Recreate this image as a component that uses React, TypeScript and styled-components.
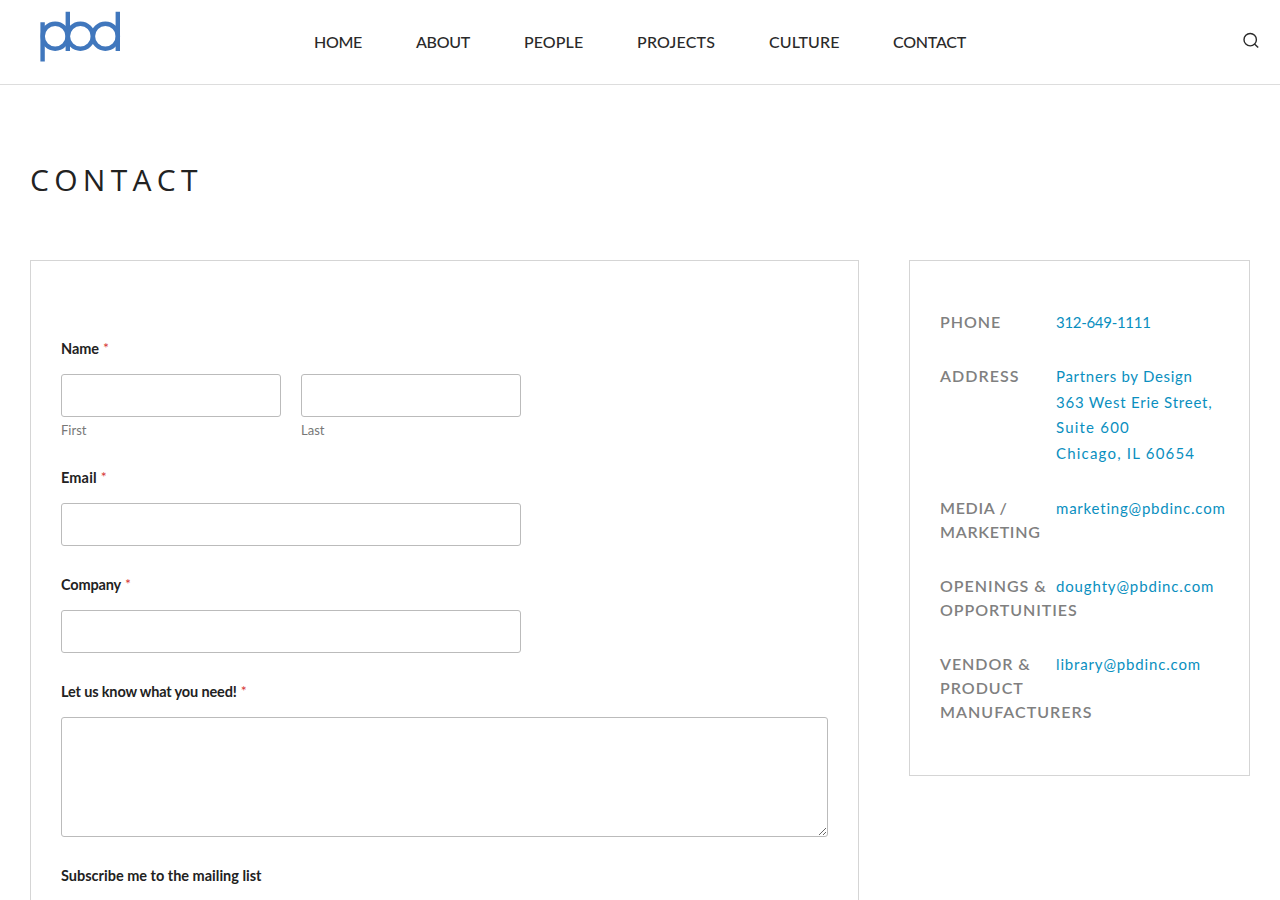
import React from "react";
import styled, { createGlobalStyle } from "styled-components";

const GlobalStyle = createGlobalStyle`
  * { box-sizing: border-box; }
  html, body { margin: 0; background: #fff; }
  body { height: 900px; overflow: hidden; color: #222; font-family: Lato, "Open Sans", sans-serif; }
`;

const Page = styled.div`
  width: 1280px;
  height: 900px;
  overflow: hidden;
`;

const Header = styled.header`
  display: flex;
  height: 85px;
  padding: 0 20px 0 40px;
  border-bottom: 1px solid #ddd;
`;

const LogoLink = styled.a`
  display: block;
  width: 80px;
  padding-top: 11px;
  svg { display: block; }
`;

const Nav = styled.nav`
  display: flex;
  gap: 54px;
  margin-left: 194px;
  padding-top: 30px;
`;

const NavLink = styled.a<{ $width: number; $track: number }>`
  width: ${(p) => p.$width}px;
  font-size: 16px;
  font-weight: 500;
  line-height: 24px;
  letter-spacing: ${(p) => p.$track}px;
  white-space: nowrap;
  color: #2a2a2a;
`;

const SearchButton = styled.button`
  align-self: flex-start;
  margin: 32px 0 0 auto;
  padding: 0;
  border: 0;
  background: none;
  svg { display: block; }
`;

const Title = styled.h1`
  margin: 75px 0 60px 30px;
  font: 400 30px/40px "Open Sans", sans-serif;
  letter-spacing: 5.3px;
  color: #222;
`;

const Columns = styled.main`
  display: grid;
  grid-template-columns: 829px 341px;
  gap: 50px;
  align-items: start;
  padding: 0 30px;
`;

const FormCard = styled.form`
  display: flex;
  flex-direction: column;
  gap: 29px;
  height: 740px;
  padding: 78px 30px 0;
  border: 1px solid #d5d5d5;
`;

const Field = styled.div`
  display: flex;
  flex-direction: column;
  gap: 15px;
`;

const Label = styled.label<{ $track: number }>`
  display: flex;
  gap: 4px;
  height: 20px;
  font-size: 14.5px;
  font-weight: 700;
  line-height: 19px;
  letter-spacing: ${(p) => p.$track}px;
  white-space: nowrap;
  color: #222;
`;

const Required = styled.span`
  font-size: 14px;
  font-weight: 400;
  line-height: 18px;
  letter-spacing: 0;
  color: #d63637;
`;

const NameRow = styled.div`
  display: grid;
  grid-template-columns: 220px 220px;
  gap: 20px;
`;

const NamePart = styled.div`
  display: flex;
  flex-direction: column;
  gap: 4px;
`;

const Input = styled.input`
  display: block;
  width: 100%;
  max-width: 460px;
  height: 43px;
  border: 1px solid #bbb;
  border-radius: 3px;
  background: #fff;
  outline: 0;
`;

const TextArea = styled.textarea`
  display: block;
  width: 100%;
  height: 120px;
  border: 1px solid #bbb;
  border-radius: 3px;
  background: #fff;
  resize: vertical;
  outline: 0;
`;

const SubLabel = styled.span`
  font-size: 13px;
  line-height: 18px;
  color: #777;
`;

const InfoCard = styled.aside`
  display: flex;
  flex-direction: column;
  gap: 30px;
  height: 516px;
  padding: 49px 0 0 30px;
  border: 1px solid #d5d5d5;
`;

const InfoRow = styled.div<{ $height: number }>`
  display: grid;
  grid-template-columns: 116px 1fr;
  height: ${(p) => p.$height}px;
`;

const InfoLabel = styled.div`
  font-size: 16px;
  font-weight: 600;
  line-height: 24px;
  color: #808080;
`;

const InfoValue = styled.a`
  font-size: 15px;
  line-height: 25.6px;
  color: #0a8fc0;
`;

const Line = styled.span<{ $track: number }>`
  display: block;
  white-space: nowrap;
  letter-spacing: ${(p) => p.$track}px;
`;

type TextLine = [text: string, track: number];

const navItems: [string, number, number][] = [
  ["HOME", 48, -0.35],
  ["ABOUT", 54, -0.3],
  ["PEOPLE", 59, 0.1],
  ["PROJECTS", 78, 0.2],
  ["CULTURE", 70, 0.1],
  ["CONTACT", 74, -0.25],
];

const info: { height: number; label: TextLine[]; value: TextLine[] }[] = [
  { height: 24, label: [["PHONE", 0.95]], value: [["312-649-1111", -0.3]] },
  {
    height: 102,
    label: [["ADDRESS", 1.05]],
    value: [
      ["Partners by Design", 0.7],
      ["363 West Erie Street,", 0.77],
      ["Suite 600", 1.2],
      ["Chicago, IL 60654", 1.2],
    ],
  },
  { height: 48, label: [["MEDIA /", 0.7], ["MARKETING", 0.7]], value: [["marketing@pbdinc.com", 0.79]] },
  { height: 48, label: [["OPENINGS &", 0.98], ["OPPORTUNITIES", 0.93]], value: [["doughty@pbdinc.com", 0.86]] },
  {
    height: 72,
    label: [["VENDOR &", 0.95], ["PRODUCT", 1], ["MANUFACTURERS", 1.03]],
    value: [["library@pbdinc.com", 0.84]],
  },
];

const Logo = () => (
  <svg width="81" height="52" viewBox="0 0 81 52" fill="none" stroke="#4077bd" strokeWidth="4.4">
    <path d="M2.6 11.3V50.6M27.8 .7V40M77.8 .7V40" />
    <circle cx="15.2" cy="25.2" r="12.5" />
    <circle cx="40.4" cy="25.2" r="12.5" />
    <circle cx="65.4" cy="25.2" r="12.5" />
  </svg>
);

const SearchIcon = () => (
  <svg width="18" height="18" viewBox="0 0 18 18" fill="none" stroke="#2a2a2a" strokeWidth="1.4">
    <circle cx="8.2" cy="7.7" r="6.2" />
    <path d="M12.5 12L16.2 15.6" />
  </svg>
);

const Lines = ({ lines }: { lines: TextLine[] }) => (
  <>
    {lines.map(([text, track]) => (
      <Line key={text} $track={track}>{text}</Line>
    ))}
  </>
);

const FieldLabel = ({ text, track, required = true }: { text: string; track: number; required?: boolean }) => (
  <Label $track={track}>
    {text}
    {required && <Required>*</Required>}
  </Label>
);

export default function App() {
  return (
    <Page>
      <GlobalStyle />
      <Header>
        <LogoLink aria-label="pbd"><Logo /></LogoLink>
        <Nav>
          {navItems.map(([text, width, track]) => (
            <NavLink key={text} $width={width} $track={track}>{text}</NavLink>
          ))}
        </Nav>
        <SearchButton aria-label="Search"><SearchIcon /></SearchButton>
      </Header>
      <Title>CONTACT</Title>
      <Columns>
        <FormCard>
          <Field>
            <FieldLabel text="Name" track={-0.08} />
            <NameRow>
              <NamePart><Input /><SubLabel>First</SubLabel></NamePart>
              <NamePart><Input /><SubLabel>Last</SubLabel></NamePart>
            </NameRow>
          </Field>
          <Field>
            <FieldLabel text="Email" track={0.15} />
            <Input />
          </Field>
          <Field>
            <FieldLabel text="Company" track={-0.15} />
            <Input />
          </Field>
          <Field>
            <FieldLabel text="Let us know what you need!" track={-0.15} />
            <TextArea />
          </Field>
          <Field>
            <FieldLabel text="Subscribe me to the mailing list" track={0} required={false} />
          </Field>
        </FormCard>
        <InfoCard>
          {info.map((row) => (
            <InfoRow key={row.label[0][0]} $height={row.height}>
              <InfoLabel><Lines lines={row.label} /></InfoLabel>
              <InfoValue><Lines lines={row.value} /></InfoValue>
            </InfoRow>
          ))}
        </InfoCard>
      </Columns>
    </Page>
  );
}
